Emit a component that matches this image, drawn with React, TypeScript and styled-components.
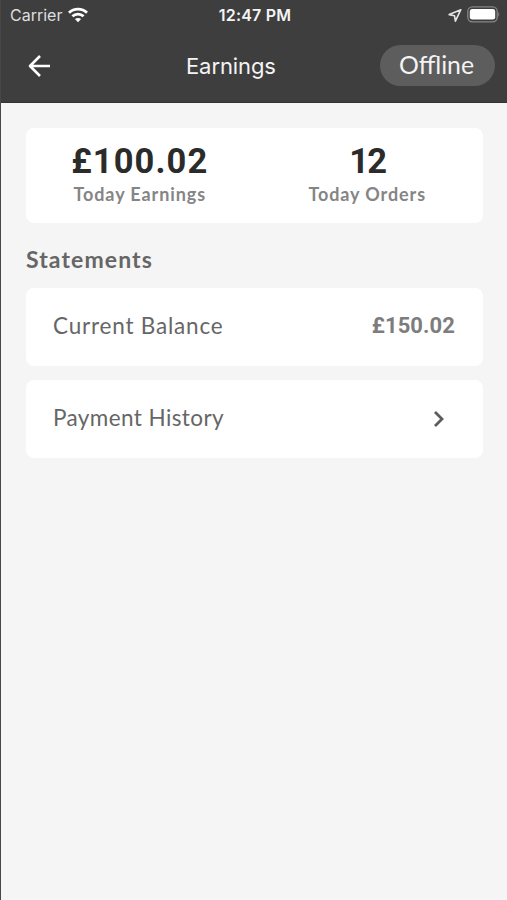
import React from 'react';
import styled, { createGlobalStyle } from 'styled-components';

const GlobalStyle = createGlobalStyle`
  * { box-sizing: border-box; }
  body { margin: 0; background: #f5f5f5; }
`;

const Screen = styled.main`
  width: 507px;
  height: 900px;
  overflow: hidden;
  background: #f5f5f5;
  border-left: 1px solid #48484a;
  font-family: Lato, sans-serif;
`;

const Header = styled.header`
  height: 103px;
  background: #3e3e3e;
  border-bottom: 1px solid #333;
  color: #f4f4f4;
`;

const StatusBar = styled.div`
  display: grid;
  grid-template-columns: 1fr auto 1fr;
  align-items: center;
  height: 30px;
  padding: 0 7px 0 9px;
  font-family: Inter, sans-serif;
  font-size: 16px;
`;

const Carrier = styled.div`
  display: flex;
  align-items: center;
  gap: 6px;
  color: #dedede;
`;

const Clock = styled.time`
  font-weight: 600;
  letter-spacing: 0.2px;
`;

const Indicators = styled.div`
  display: flex;
  justify-content: flex-end;
  align-items: center;
  gap: 5px;
  padding-bottom: 1px;
`;

const NavBar = styled.nav`
  display: grid;
  grid-template-columns: 145px 1fr 115px;
  align-items: center;
  height: 71px;
  padding: 0 12px 0 25px;
`;

const IconButton = styled.button`
  display: flex;
  width: 24px;
  padding: 0;
  border: 0;
  background: none;
  color: #fff;
`;

const Title = styled.h1`
  margin: 0 0 0 15px;
  font: 400 22px Inter, sans-serif;
  letter-spacing: -0.1px;
`;

const StatusPill = styled.button`
  height: 41px;
  padding: 0 2px 2px 0;
  border: 0;
  border-radius: 21px;
  background: #5d5d5d;
  color: #f4f4f4;
  font: 400 24.8px Lato, sans-serif;
`;

const Content = styled.section`
  padding: 25px 24px 0 25px;
`;

const Card = styled.div`
  display: flex;
  align-items: center;
  background: #fff;
  border-radius: 8px;
`;

const SummaryCard = styled(Card)`
  height: 95px;
  padding: 0 2px 4px 0;
`;

const Stat = styled.div`
  flex: 1;
  text-align: center;
`;

const StatValue = styled.div<{ $tracking: number }>`
  color: #2b2b2b;
  font-family: Roboto, sans-serif;
  font-size: 34.5px;
  font-weight: 700;
  line-height: 40px;
  letter-spacing: ${(p) => p.$tracking}px;
`;

const StatLabel = styled.div`
  color: #858585;
  font-size: 18px;
  font-weight: 700;
  line-height: 26px;
  letter-spacing: 0.9px;
`;

const SectionTitle = styled.h2`
  margin: 21px 0 14px;
  color: #666;
  font-size: 23px;
  font-weight: 700;
  line-height: 30px;
  letter-spacing: 1.1px;
`;

const Row = styled(Card)`
  justify-content: space-between;
  height: 78px;
  margin-bottom: 14px;
  padding: 0 28px 2px 27px;
`;

const RowLabel = styled.span<{ $tracking: number }>`
  color: #666;
  font-size: 22.5px;
  line-height: 26px;
  letter-spacing: ${(p) => p.$tracking}px;
`;

const Amount = styled.span`
  color: #7d7d7d;
  font: 700 22px/26px Roboto, sans-serif;
  letter-spacing: 0.1px;
`;

const Chevron = styled.svg`
  margin: 2px 10px 0 0;
`;

const WifiIcon = () => (
  <svg width="20" height="16" viewBox="0 0 20 16" fill="none" stroke="#fff" strokeWidth="2.8">
    <path d="M1 5.7C6 .9 14 .9 19 5.7" />
    <path d="M4.4 9.3C7.5 6.3 12.5 6.3 15.6 9.3" />
    <path d="M10 15.2 6.9 12.1c1.7-1.6 4.5-1.6 6.2 0z" fill="#fff" stroke="none" />
  </svg>
);

const LocationIcon = () => (
  <svg width="14" height="14" viewBox="0 0 14 14" fill="none" stroke="#e4e4e4" strokeWidth="1.6" strokeLinejoin="round">
    <path d="M12.8 1.7 1.2 6.6l5.3 1.1.9 5.5z" />
  </svg>
);

const BatteryIcon = () => (
  <svg width="33" height="17" viewBox="0 0 33 17">
    <rect x=".8" y=".8" width="29.4" height="15" rx="4.5" fill="none" stroke="#858585" strokeWidth="1.3" />
    <rect x="2.8" y="3" width="25.4" height="10.6" rx="2.4" fill="#fff" />
    <path d="M31.3 6v4.8c1.3-.7 1.3-4.1 0-4.8z" fill="#858585" />
  </svg>
);

const BackIcon = () => (
  <svg width="24" height="24" viewBox="0 0 24 24" fill="none" stroke="currentColor" strokeWidth="2.6" strokeLinejoin="round">
    <path d="M24 12H4M14 2 4 12l10 10" />
  </svg>
);

export default function App() {
  return (
    <>
      <GlobalStyle />
      <Screen>
        <Header>
          <StatusBar>
            <Carrier>Carrier<WifiIcon /></Carrier>
            <Clock>12:47 PM</Clock>
            <Indicators><LocationIcon /><BatteryIcon /></Indicators>
          </StatusBar>
          <NavBar>
            <IconButton aria-label="Back"><BackIcon /></IconButton>
            <Title>Earnings</Title>
            <StatusPill>Offline</StatusPill>
          </NavBar>
        </Header>
        <Content>
          <SummaryCard>
            <Stat>
              <StatValue $tracking={1.1}>£100.02</StatValue>
              <StatLabel>Today Earnings</StatLabel>
            </Stat>
            <Stat>
              <StatValue $tracking={-1.8}>12</StatValue>
              <StatLabel>Today Orders</StatLabel>
            </Stat>
          </SummaryCard>
          <SectionTitle>Statements</SectionTitle>
          <Row>
            <RowLabel $tracking={0.8}>Current Balance</RowLabel>
            <Amount>£150.02</Amount>
          </Row>
          <Row>
            <RowLabel $tracking={0.4}>Payment History</RowLabel>
            <Chevron width="12" height="18" viewBox="0 0 12 18" fill="none" stroke="#5c5c5c" strokeWidth="2.8">
              <path d="m2 2 7 7-7 7" />
            </Chevron>
          </Row>
        </Content>
      </Screen>
    </>
  );
}
